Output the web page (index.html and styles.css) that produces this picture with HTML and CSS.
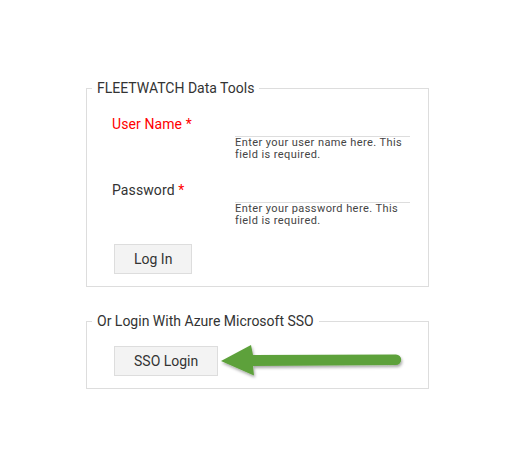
FILE: index.html
```html
<!DOCTYPE html>
<html lang="en">
<head>
<meta charset="utf-8">
<title>FLEETWATCH Data Tools</title>
<link rel="stylesheet" href="styles.css">
</head>
<body>
<div class="page">
  <fieldset class="panel">
    <legend class="legend">FLEETWATCH Data Tools</legend>
    <div class="form">
      <div class="row">
        <label class="label label-error" for="user">User Name <span class="star">*</span></label>
        <div class="field">
          <input class="input" id="user" type="text">
          <div class="hint">Enter your user name here. This field is required.</div>
        </div>
      </div>
      <div class="row">
        <label class="label" for="pass">Password <span class="star">*</span></label>
        <div class="field">
          <input class="input" id="pass" type="password">
          <div class="hint">Enter your password here. This field is required.</div>
        </div>
      </div>
      <button class="btn btn-login" type="button">Log In</button>
    </div>
  </fieldset>
  <fieldset class="panel panel-sso">
    <legend class="legend">Or Login With Azure Microsoft SSO</legend>
    <div class="sso-row">
      <button class="btn" type="button">SSO Login</button>
      <svg class="arrow" width="190" height="38" viewBox="0 0 190 38" aria-hidden="true">
        <defs>
          <filter id="shadow" x="-10%" y="-30%" width="120%" height="180%">
            <feDropShadow dx="1" dy="2" stdDeviation="1.4" flood-color="#000" flood-opacity="0.35"/>
          </filter>
        </defs>
        <path filter="url(#shadow)" fill="#5da13a" d="M3,18 L33,2 L35,12 L178,11.5 A5.2,5.2 0 0 1 178,21.9 L35,23 L36,32.5 Z"/>
      </svg>
    </div>
  </fieldset>
</div>
</body>
</html>
```
FILE: styles.css
```css
html, body {
  margin: 0;
  padding: 0;
  background: #ffffff;
}

body {
  font-family: Roboto, "Liberation Sans", Arial, sans-serif;
  color: #333333;
}

.page {
  padding: 80px 0 0 86px;
  width: 343px;
}

.panel {
  box-sizing: border-box;
  width: 343px;
  min-width: 0;
  margin: 0;
  padding: 0;
  border: 1px solid #dddddd;
}

.panel-sso {
  margin-top: 26px;
}

.legend {
  margin-left: 5px;
  padding: 0 5px;
  font-size: 14px;
  line-height: 16px;
  color: #333333;
}

.form {
  padding: 20px 0 12px 25px;
}

.row {
  display: grid;
  grid-template-columns: 123px 175px;
}

.row + .row {
  margin-top: 21px;
}

.label {
  font-size: 14px;
  line-height: 16px;
  color: #333333;
  letter-spacing: 0.1px;
}

.label-error {
  color: #ff0000;
}

.star {
  color: #ff0000;
}

.input {
  display: block;
  box-sizing: border-box;
  width: 175px;
  height: 21px;
  margin: 0;
  padding: 0;
  border: 0;
  border-bottom: 1px solid #dddddd;
  background: transparent;
  outline: none;
  font: 12px Roboto, "Liberation Sans", sans-serif;
}

.hint {
  font-size: 11px;
  line-height: 12px;
  letter-spacing: 0.42px;
  color: #444444;
}

.btn {
  display: block;
  box-sizing: border-box;
  height: 30px;
  padding: 0 19px;
  margin: 0;
  border: 1px solid #dddddd;
  background: #f3f3f3;
  color: #333333;
  font-family: Roboto, "Liberation Sans", sans-serif;
  font-size: 14px;
  line-height: 16px;
}

.btn-login {
  margin: 17px 0 0 2px;
}

.sso-row {
  display: flex;
  align-items: center;
  padding: 17px 0 12px 27px;
}

.arrow {
  display: block;
  flex: none;
  margin: -3px 0 -5px;
}
```
